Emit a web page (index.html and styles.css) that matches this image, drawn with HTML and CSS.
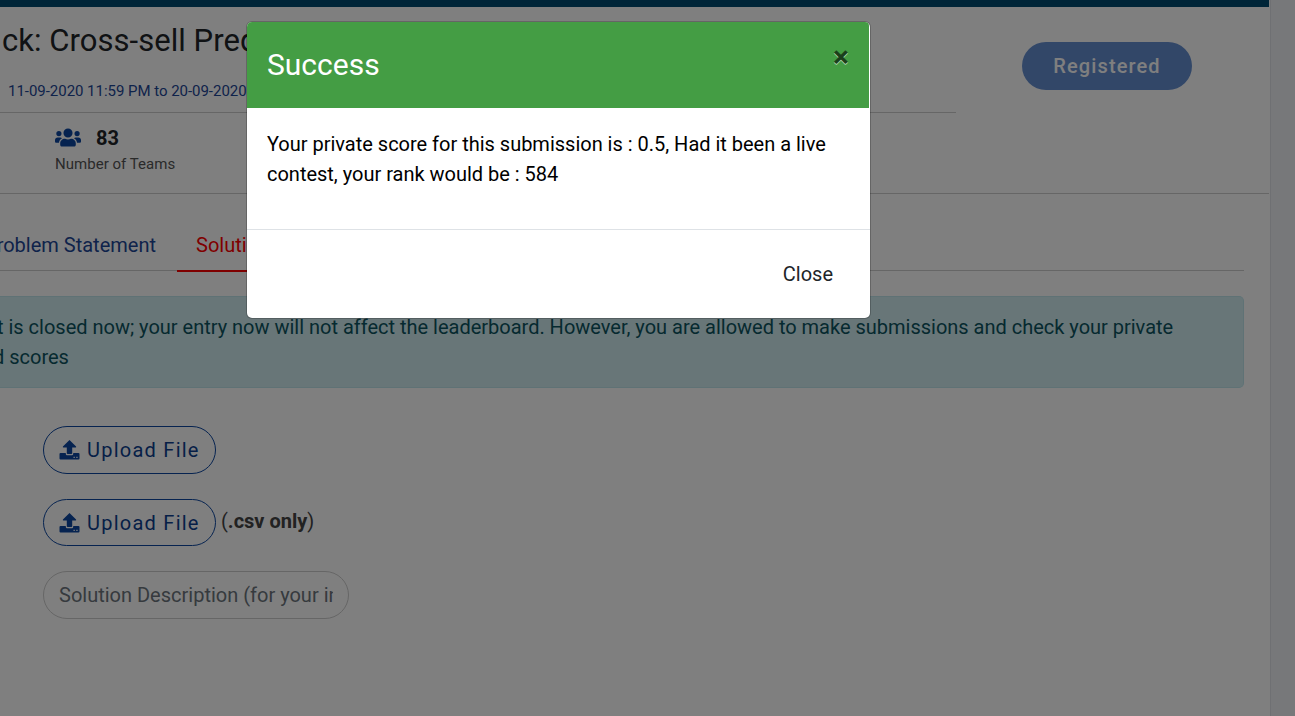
FILE: index.html
```html
<!DOCTYPE html>
<html lang="en">
<head>
<meta charset="utf-8">
<title>Cross-sell Prediction</title>
<link rel="stylesheet" href="styles.css">
</head>
<body>
<svg class="symbols" aria-hidden="true">
  <symbol id="upload" viewBox="0 0 20 20">
    <path d="M10 0 16.6 6.5Q17 7.3 16.1 7.5H12.7V13.2Q12.7 14 11.9 14H8.1Q7.3 14 7.3 13.2V7.5H3.9Q3 7.3 3.4 6.5Z"/>
    <path fill-rule="evenodd" d="M1 13H6.3V14Q6.3 15.2 7.5 15.2H12.5Q13.7 15.2 13.7 14V13H19Q20 13 20 14V18.4Q20 19.4 19 19.4H1Q0 19.4 0 18.4V14Q0 13 1 13ZM14 16.8V18.1H15.3V16.8ZM16.8 16.8V18.1H18.1V16.8Z"/>
  </symbol>
  <symbol id="users" viewBox="0 0 640 512">
    <path d="M96 224a64 64 0 1 0 0-128 64 64 0 0 0 0 128zm448 0a64 64 0 1 0 0-128 64 64 0 0 0 0 128zm32 32h-64c-18 0-34 7-45 19 40 22 69 62 75 109h66c18 0 32-14 32-32v-32c0-35-29-64-64-64zm-256 0a112 112 0 1 0 0-224 112 112 0 0 0 0 224zm77 32h-8c-42 20-96 20-138 0h-8c-64 0-115 52-115 115v29c0 27 21 48 48 48h288c27 0 48-21 48-48v-29c0-63-51-115-115-115zm-224-13c-11-12-27-19-45-19H64c-35 0-64 29-64 64v32c0 18 14 32 32 32h66c6-47 35-87 75-109z"/>
  </symbol>
</svg>

<div class="layout">
  <main class="page">
    <div class="topbar"></div>
    <header class="hero">
      <div class="hero-info">
        <h1 class="title">ck: Cross-sell Pred</h1>
        <p class="dates">11-09-2020 11:59 PM to 20-09-2020</p>
        <div class="stats">
          <div class="stat"><svg class="users-icon"><use href="#users"/></svg><b>83</b></div>
          <div class="stat-label">Number of Teams</div>
        </div>
      </div>
      <button class="registered">Registered</button>
    </header>

    <section class="content">
      <nav class="tabs">
        <a class="tab first">Problem Statement</a>
        <a class="tab active">Solution</a>
      </nav>
      <div class="alert">
        <div class="alert-line">t is closed now; your entry now will not affect the leaderboard. However, you are allowed to make submissions and check your private</div>
        <div class="alert-line second">d scores</div>
      </div>
      <form class="form">
        <div class="row"><button type="button" class="upload"><svg><use href="#upload"/></svg>Upload File</button></div>
        <div class="row last"><button type="button" class="upload short"><svg><use href="#upload"/></svg>Upload File</button><span class="hint">(<b>.csv only</b>)</span></div>
        <div class="description"><span>Solution Description (for your information)</span></div>
      </form>
    </section>
  </main>
  <aside class="gutter"></aside>
</div>

<div class="backdrop">
  <div class="modal">
    <div class="modal-header">
      <h2>Success</h2>
      <button class="dismiss">×</button>
    </div>
    <div class="modal-body">Your private score for this submission is : 0.5, Had it been a live contest, your rank would be : 584</div>
    <div class="modal-footer"><button class="close">Close</button></div>
  </div>
</div>
</body>
</html>
```
FILE: styles.css
```css
* { box-sizing: border-box; }
body {
  margin: 0;
  height: 716px;
  overflow: hidden;
  font: 20px/30px Roboto, "Liberation Sans", sans-serif;
  color: #212529;
}
button { font: inherit; margin: 0; }
h1, h2, p { margin: 0; font-weight: 400; }
.symbols { display: none; }
.layout { display: flex; height: 716px; }
.page { width: 1269px; overflow: hidden; background: #fff; }
.gutter { flex: 1; margin-left: 1px; background: #eff0f5; border-left: 1px solid #dfe1e7; }
.topbar { height: 7px; background: #004b70; }

.hero {
  display: flex;
  height: 187px;
  border-bottom: 1px solid #ccc;
}
.hero-info { width: 956px; }
.title {
  height: 68px;
  padding: 15px 0 0 2px;
  font-size: 31px;
  line-height: 38px;
  letter-spacing: .04px;
  white-space: nowrap;
}
.dates {
  height: 38px;
  padding: 5px 0 0 8px;
  border-bottom: 1px solid #ccc;
  color: #1d4696;
  font-size: 15px;
  line-height: 23px;
  letter-spacing: -.03px;
}
.stats { padding: 11px 0 0 55px; }
.stat { display: flex; align-items: center; gap: 15px; height: 28px; }
.users-icon { width: 26px; height: 21px; margin-top: -2px; fill: #0d47a1; }
.stat-label { color: #555; font-size: 15px; line-height: 24px; letter-spacing: .03px; }
.registered {
  width: 170px;
  height: 48px;
  margin: 35px 0 0 66px;
  padding: 0;
  border: 0;
  border-radius: 24px;
  background: #648ed0;
  color: #fff;
  font-weight: 500;
  letter-spacing: 1.1px;
}

.content { padding-right: 25px; }
.tabs {
  display: flex;
  height: 77px;
  padding-top: 28px;
  border-bottom: 1px solid #ccc;
}
.tab {
  height: 50px;
  padding: 8px 19px 0;
  color: #1d4696;
  white-space: nowrap;
}
.tab.first { display: flex; justify-content: flex-end; width: 177px; padding: 8px 21px 0 0; }
.tab.active { border-bottom: 2px solid red; color: red; }
.alert {
  height: 92px;
  margin-top: 25px;
  padding: 15px 0;
  border: 1px solid #bee5eb;
  border-left: 0;
  border-radius: 0 5px 5px 0;
  background: #d1ecf1;
  color: #0c5460;
}
.alert-line { margin-left: -3px; white-space: nowrap; letter-spacing: -.008px; }
.alert-line.second { margin-left: -7px; }

.form { padding: 38px 0 0 43px; }
.row { display: flex; height: 73px; }
.row.last { height: 72px; }
.upload {
  display: flex;
  align-items: center;
  width: 173px;
  height: 48px;
  padding: 0 0 0 15px;
  border: 1px solid #0d47a1;
  border-radius: 24px;
  background: none;
  color: #0d3f8f;
  letter-spacing: 1.25px;
  white-space: nowrap;
}
.upload.short { height: 47px; }
.upload svg { width: 21px; height: 20px; margin-right: 7px; fill: #0d47a1; }
.hint { margin: 7px 0 0 5px; color: #444; }
.hint b { font-weight: 700; }
.description {
  display: flex;
  width: 306px;
  height: 48px;
  padding: 8px 15px 0 15px;
  border: 1px solid #ccc;
  border-radius: 24px;
  color: #6c757d;
}
.description span { height: 30px; overflow: hidden; white-space: nowrap; }

.backdrop {
  position: absolute;
  inset: 0;
  padding: 21px 0 0 246px;
  background: rgba(0, 0, 0, .5);
}
.modal {
  width: 625px;
  height: 298px;
  border: 1px solid rgba(0, 0, 0, .2);
  border-radius: 6px;
  background: #fff;
  background-clip: padding-box;
  color: #000;
}
.modal-header {
  display: flex;
  justify-content: space-between;
  height: 86px;
  width: 622px;
  padding: 24px 20px 0;
  border-radius: 5px 4px 0 0;
  background: #449d44;
  color: #fff;
}
.modal-header h2 { font-size: 30px; line-height: 38px; }
.dismiss {
  height: 30px;
  margin-top: -4px;
  padding: 0;
  border: 0;
  background: none;
  color: #000;
  opacity: .6;
  font-weight: 700;
  font-size: 30px;
  line-height: 30px;
  text-shadow: 0 1px 0 #fff;
}
.modal-body { height: 122px; padding: 21px 20px; letter-spacing: -.01px; border-bottom: 1px solid #dee2e6; }
.modal-footer { display: flex; justify-content: flex-end; padding: 29px 37px 0; }
.close { padding: 0; border: 0; background: none; color: #212529; }
```
